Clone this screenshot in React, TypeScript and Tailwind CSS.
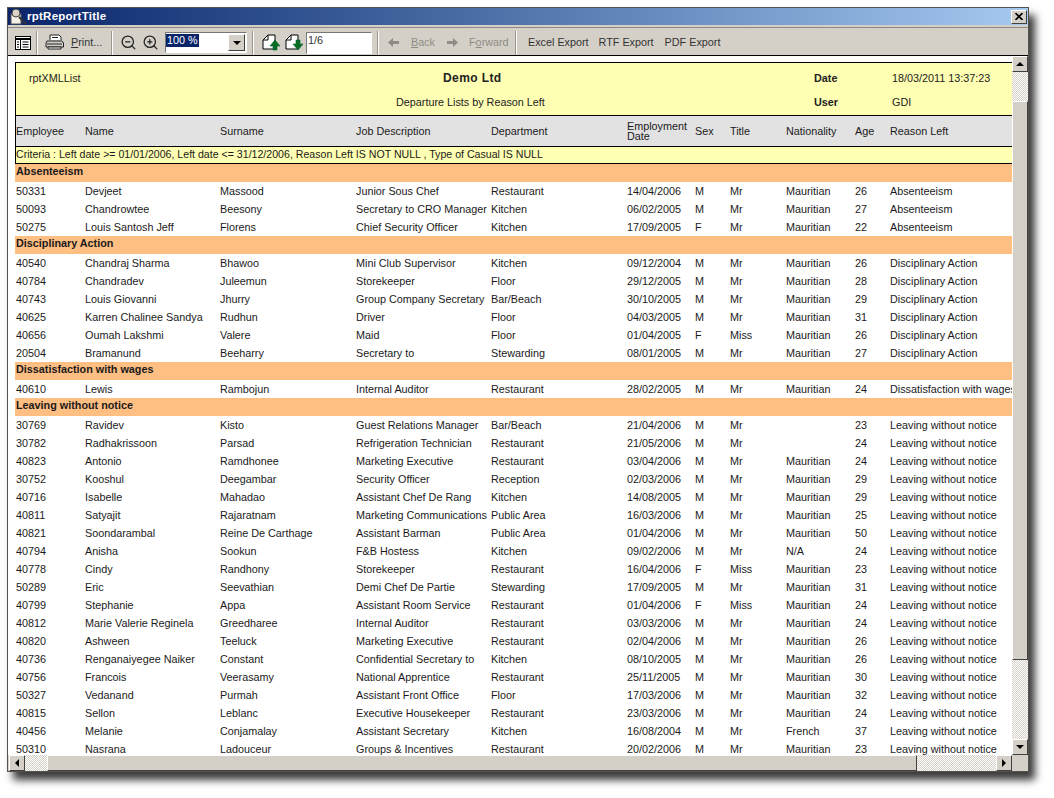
import { ZoomIn, ZoomOut } from "lucide-react";

type Emp = [string, string, string, string, string, string, string, string, string, string, string];

const groups: { title: string; rows: Emp[] }[] = [
  {
    title: "Absenteeism",
    rows: [
      ["50331", "Devjeet", "Massood", "Junior Sous Chef", "Restaurant", "14/04/2006", "M", "Mr", "Mauritian", "26", "Absenteeism"],
      ["50093", "Chandrowtee", "Beesony", "Secretary to CRO Manager", "Kitchen", "06/02/2005", "M", "Mr", "Mauritian", "27", "Absenteeism"],
      ["50275", "Louis Santosh Jeff", "Florens", "Chief Security Officer", "Kitchen", "17/09/2005", "F", "Mr", "Mauritian", "22", "Absenteeism"],
    ],
  },
  {
    title: "Disciplinary Action",
    rows: [
      ["40540", "Chandraj Sharma", "Bhawoo", "Mini Club Supervisor", "Kitchen", "09/12/2004", "M", "Mr", "Mauritian", "26", "Disciplinary Action"],
      ["40784", "Chandradev", "Juleemun", "Storekeeper", "Floor", "29/12/2005", "M", "Mr", "Mauritian", "28", "Disciplinary Action"],
      ["40743", "Louis Giovanni", "Jhurry", "Group Company Secretary", "Bar/Beach", "30/10/2005", "M", "Mr", "Mauritian", "29", "Disciplinary Action"],
      ["40625", "Karren Chalinee Sandya", "Rudhun", "Driver", "Floor", "04/03/2005", "M", "Mr", "Mauritian", "31", "Disciplinary Action"],
      ["40656", "Oumah Lakshmi", "Valere", "Maid", "Floor", "01/04/2005", "F", "Miss", "Mauritian", "26", "Disciplinary Action"],
      ["20504", "Bramanund", "Beeharry", "Secretary to", "Stewarding", "08/01/2005", "M", "Mr", "Mauritian", "27", "Disciplinary Action"],
    ],
  },
  {
    title: "Dissatisfaction with wages",
    rows: [
      ["40610", "Lewis", "Rambojun", "Internal Auditor", "Restaurant", "28/02/2005", "M", "Mr", "Mauritian", "24", "Dissatisfaction with wages"],
    ],
  },
  {
    title: "Leaving without notice",
    rows: [
      ["30769", "Ravidev", "Kisto", "Guest Relations Manager", "Bar/Beach", "21/04/2006", "M", "Mr", "", "23", "Leaving without notice"],
      ["30782", "Radhakrissoon", "Parsad", "Refrigeration Technician", "Restaurant", "21/05/2006", "M", "Mr", "", "24", "Leaving without notice"],
      ["40823", "Antonio", "Ramdhonee", "Marketing Executive", "Restaurant", "03/04/2006", "M", "Mr", "Mauritian", "24", "Leaving without notice"],
      ["30752", "Kooshul", "Deegambar", "Security Officer", "Reception", "02/03/2006", "M", "Mr", "Mauritian", "29", "Leaving without notice"],
      ["40716", "Isabelle", "Mahadao", "Assistant Chef De Rang", "Kitchen", "14/08/2005", "M", "Mr", "Mauritian", "29", "Leaving without notice"],
      ["40811", "Satyajit", "Rajaratnam", "Marketing Communications", "Public Area", "16/03/2006", "M", "Mr", "Mauritian", "25", "Leaving without notice"],
      ["40821", "Soondarambal", "Reine De Carthage", "Assistant Barman", "Public Area", "01/04/2006", "M", "Mr", "Mauritian", "50", "Leaving without notice"],
      ["40794", "Anisha", "Sookun", "F&B Hostess", "Kitchen", "09/02/2006", "M", "Mr", "N/A", "24", "Leaving without notice"],
      ["40778", "Cindy", "Randhony", "Storekeeper", "Restaurant", "16/04/2006", "F", "Miss", "Mauritian", "23", "Leaving without notice"],
      ["50289", "Eric", "Seevathian", "Demi Chef De Partie", "Stewarding", "17/09/2005", "M", "Mr", "Mauritian", "31", "Leaving without notice"],
      ["40799", "Stephanie", "Appa", "Assistant Room Service", "Restaurant", "01/04/2006", "F", "Miss", "Mauritian", "24", "Leaving without notice"],
      ["40812", "Marie Valerie Reginela", "Greedharee", "Internal Auditor", "Restaurant", "03/03/2006", "M", "Mr", "Mauritian", "24", "Leaving without notice"],
      ["40820", "Ashween", "Teeluck", "Marketing Executive", "Restaurant", "02/04/2006", "M", "Mr", "Mauritian", "26", "Leaving without notice"],
      ["40736", "Renganaiyegee Naiker", "Constant", "Confidential Secretary to", "Kitchen", "08/10/2005", "M", "Mr", "Mauritian", "26", "Leaving without notice"],
      ["40756", "Francois", "Veerasamy", "National Apprentice", "Restaurant", "25/11/2005", "M", "Mr", "Mauritian", "30", "Leaving without notice"],
      ["50327", "Vedanand", "Purmah", "Assistant Front Office", "Floor", "17/03/2006", "M", "Mr", "Mauritian", "32", "Leaving without notice"],
      ["40815", "Sellon", "Leblanc", "Executive Housekeeper", "Restaurant", "23/03/2006", "M", "Mr", "Mauritian", "24", "Leaving without notice"],
      ["40456", "Melanie", "Conjamalay", "Assistant Secretary", "Kitchen", "16/08/2004", "M", "Mr", "French", "37", "Leaving without notice"],
      ["50310", "Nasrana", "Ladouceur", "Groups & Incentives", "Restaurant", "20/02/2006", "M", "Mr", "Mauritian", "23", "Leaving without notice"],
    ],
  },
];

const cols = "grid grid-cols-[69px_135px_136px_135px_136px_68px_35px_56px_69px_35px_130px] items-center";

const Sep = () => <div className="mx-[5px] h-[24px] w-[2px] border-l border-r border-l-[#9a978f] border-r-white" />;

const raised = "border border-t-white border-l-white border-r-[#404040] border-b-[#404040] bg-[#d4d0c8]";
const dither = "bg-[repeating-conic-gradient(#d4d0c8_0_25%,#ffffff_0_50%)] bg-[length:2px_2px]";

const PageIcon = ({ down }: { down?: boolean }) => (
  <svg width="22" height="20" viewBox="0 0 22 20">
    <path d="M3 7 8 2h7v14H3z" fill="#fff" stroke="#000" />
    <path d="M3 7h5V2" fill="none" stroke="#000" />
    {down ? (
      <path d="M10 11h3V7h4v4h3l-5 6z" fill="#0a6b24" stroke="#063" strokeWidth="0.6" />
    ) : (
      <path d="M10 13h3v4h4v-4h3l-5-6z" fill="#0a6b24" stroke="#063" strokeWidth="0.6" />
    )}
  </svg>
);

const Arrow = ({ right }: { right?: boolean }) => (
  <svg width="13" height="11" viewBox="0 0 13 11">
    <path d={right ? "M1 4h6V1l5 4.5L7 10V7H1z" : "M12 4H6V1L1 5.5 6 10V7h6z"} fill="#8f8c85" />
  </svg>
);

const App = () => {
  return (
    <div className="h-[798px] w-[1054px] overflow-hidden bg-white pl-[7px] pt-[7px] font-['Liberation_Sans',Arial,sans-serif] text-[10.8px] text-[#1a1a1a]">
      <div className="flex h-[765px] w-[1022px] flex-col border border-[#55534e] bg-[#d4d0c8] shadow-[6px_8px_8px_#3a3a3a]">
        {/* Title bar */}
        <div className="flex h-[17px] shrink-0 items-center justify-between bg-gradient-to-r from-[#0a246a] to-[#a6caf0] pl-[1px] pr-[1px]">
          <div className="flex items-center">
            <svg width="18" height="17" viewBox="0 0 18 17">
              <rect x="2" y="6" width="10" height="10" fill="#f4f0e4" stroke="#555" />
              <circle cx="7" cy="5" r="4" fill="#d8d4c8" stroke="#444" />
              <path d="M10 9l7 7" stroke="#333" strokeWidth="2" />
            </svg>
            <span className="text-[11.5px] font-bold leading-none tracking-[0.25px] text-white">rptReportTitle</span>
          </div>
          <div className={`flex h-[14px] w-[16px] items-center justify-center ${raised}`}>
            <svg width="8" height="7" viewBox="0 0 8 7">
              <path d="M0.5 0 7.5 7M7.5 0 0.5 7" stroke="#000" strokeWidth="1.6" />
            </svg>
          </div>
        </div>

        {/* Toolbar */}
        <div className="mt-[2px] flex h-[29px] shrink-0 items-center border-y border-b-black border-t-[#8c8a84] pl-[6px] pt-[2px] text-[#333]">
          <svg width="16" height="14" viewBox="0 0 16 14" className="ml-[1px]">
            <rect x="0.5" y="0.5" width="15" height="13" fill="#fff" stroke="#000" />
            <path d="M0.5 3h15" stroke="#000" strokeWidth="2" />
            <path d="M5.5 3v10M7.5 6h6M7.5 8.5h6M7.5 11h6M2 6h2M2 8.5h2M2 11h2" stroke="#000" />
          </svg>
          <Sep />
          <svg width="20" height="17" viewBox="0 0 20 17" className="mx-[2px]">
            <path d="M5 6V1h9l2 2v3" fill="#fff" stroke="#222" />
            <path d="M2 7h15l1.5 2v4H1V9z" fill="#d4d0c8" stroke="#222" />
            <path d="M3 15h13v-2H3z" fill="#fff" stroke="#222" />
            <path d="M2 10h15M7 3.5h6" stroke="#222" />
          </svg>
          <span className="ml-[4px] w-[35px]"><u>P</u>rint...</span>
          <Sep />
          <ZoomOut size={17} strokeWidth={1.8} className="ml-[2px] text-[#222]" />
          <ZoomIn size={17} strokeWidth={1.8} className="ml-[5px] text-[#222]" />
          <div className="ml-[6px] flex h-[21px] w-[82px] items-start justify-between border border-t-[#777] border-l-[#777] border-r-white border-b-white bg-white">
            <span className="mt-[1px] bg-[#0a246a] pl-[1px] pr-[1px] leading-[13px] text-white">100 %</span>
            <div className={`mr-[1px] mt-[1px] flex h-[17px] w-[17px] items-center justify-center ${raised}`}>
              <div className="h-0 w-0 border-x-[4px] border-t-[4px] border-x-transparent border-t-black" />
            </div>
          </div>
          <Sep />
          <div className="ml-[1px]"><PageIcon /></div>
          <div className="ml-[1px]"><PageIcon down /></div>
          <div className="ml-[1px] h-[22px] w-[66px] border border-t-[#777] border-l-[#777] border-r-white border-b-white bg-white pl-[1px] leading-[14px]">1/6</div>
          <Sep />
          <div className="ml-[3px]"><Arrow /></div>
          <span className="ml-[11px] w-[30px] text-[#8f8c85]"><u>B</u>ack</span>
          <div className="ml-[5px]"><Arrow right /></div>
          <span className="ml-[10px] w-[41px] text-[#8f8c85]">F<u>o</u>rward</span>
          <Sep />
          <span className="ml-[6px]">Excel Export</span>
          <span className="ml-[10px]">RTF Export</span>
          <span className="ml-[11px]">PDF Export</span>
        </div>

        <div className="flex min-h-0 flex-1 flex-col">
          <div className="flex min-h-0 flex-1">
            {/* Report page */}
            <div className="min-w-0 flex-1 overflow-hidden bg-white pl-[7px] pt-[6px]">
              <div className="w-[1050px]">
                <div className="relative h-[54px] border-y border-l border-black bg-[#ffffb4] text-[#222]">
                  <div className={`${cols} h-[28px] pt-[2px]`}>
                    <span className="pl-[13px]">rptXMLList</span>
                  </div>
                  <span className="absolute left-[427px] top-[6px] text-[12px] font-bold tracking-[0.4px]">Demo Ltd</span>
                  <span className="absolute left-[380px] top-[31px]">Departure Lists by Reason Left</span>
                  <span className="absolute left-[798px] top-[7px] font-bold">Date</span>
                  <span className="absolute left-[798px] top-[31px] font-bold">User</span>
                  <span className="absolute left-[876px] top-[7px]">18/03/2011 13:37:23</span>
                  <span className="absolute left-[876px] top-[31px]">GDI</span>
                </div>
                <div className={`${cols} h-[30px] border-l border-black bg-[#e2e2e2]`}>
                  <span>Employee</span>
                  <span>Name</span>
                  <span>Surname</span>
                  <span>Job Description</span>
                  <span>Department</span>
                  <span className="leading-[10px]">Employment<br />Date</span>
                  <span>Sex</span>
                  <span>Title</span>
                  <span>Nationality</span>
                  <span>Age</span>
                  <span>Reason Left</span>
                </div>
                <div className="flex h-[18px] items-center border-y border-l border-black bg-[#ffffb4] text-[10.6px]">
                  Criteria : Left date &gt;= 01/01/2006, Left date &lt;= 31/12/2006, Reason Left IS NOT NULL , Type of Casual IS NULL
                </div>
                {groups.map((g) => (
                  <div key={g.title}>
                    <div className="flex h-[18px] items-center bg-[#ffbe82] pb-[4px] pl-px font-bold">{g.title}</div>
                    {g.rows.map((r) => (
                      <div key={r[0]} className={`${cols} h-[18px] whitespace-nowrap pl-px`}>
                        {r.map((c, i) => (
                          <span key={i}>{c}</span>
                        ))}
                      </div>
                    ))}
                  </div>
                ))}
              </div>
            </div>

            {/* Vertical scrollbar */}
            <div className={`flex w-[16px] shrink-0 flex-col ${dither}`}>
              <div className={`flex h-[16px] items-center justify-center ${raised}`}>
                <div className="h-0 w-0 border-x-[4px] border-b-[4px] border-x-transparent border-b-black" />
              </div>
              <div className={`mt-[29px] h-[559px] ${raised}`} />
              <div className="flex-1" />
              <div className={`flex h-[16px] items-center justify-center ${raised}`}>
                <div className="h-0 w-0 border-x-[4px] border-t-[4px] border-x-transparent border-t-black" />
              </div>
            </div>
          </div>

          {/* Horizontal scrollbar */}
          <div className="flex h-[16px] shrink-0 pl-[1px]">
            <div className={`flex min-w-0 flex-1 ${dither}`}>
              <div className={`flex w-[16px] items-center justify-center ${raised}`}>
                <div className="h-0 w-0 border-y-[4px] border-r-[4px] border-y-transparent border-r-black" />
              </div>
              <div className={`ml-[22px] w-[870px] ${raised}`} />
              <div className="flex-1" />
              <div className={`flex w-[16px] items-center justify-center ${raised}`}>
                <div className="h-0 w-0 border-y-[4px] border-l-[4px] border-y-transparent border-l-black" />
              </div>
            </div>
            <div className="w-[16px]" />
          </div>
        </div>
      </div>
    </div>
  );
};

export default App;
